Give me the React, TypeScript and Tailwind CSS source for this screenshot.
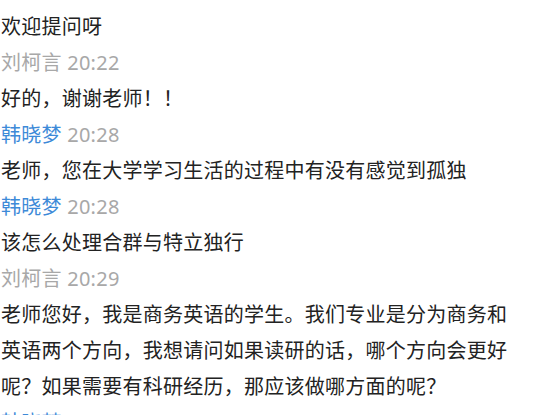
const messages = [
  { name: "刘柯言", time: "20:21", teacher: true, lines: [] as string[] },
  { name: "", time: "", teacher: false, lines: ["欢迎提问呀"] },
  { name: "刘柯言", time: "20:22", teacher: true, lines: ["好的，谢谢老师！！"] },
  {
    name: "韩晓梦",
    time: "20:28",
    teacher: false,
    lines: ["老师，您在大学学习生活的过程中有没有感觉到孤独"],
  },
  {
    name: "韩晓梦",
    time: "20:28",
    teacher: false,
    lines: ["该怎么处理合群与特立独行"],
  },
  {
    name: "刘柯言",
    time: "20:29",
    teacher: true,
    lines: [
      "老师您好，我是商务英语的学生。我们专业是分为商务和",
      "英语两个方向，我想请问如果读研的话，哪个方向会更好",
      "呢？如果需要有科研经历，那应该做哪方面的呢？",
    ],
  },
  { name: "韩晓梦", time: "20:31", teacher: false, lines: [] as string[] },
];

const App = () => {
  return (
    <div className="w-[544px] h-[415px] overflow-hidden bg-white">
      <div
        className="-mt-[27px] pl-[1px] text-[20px] leading-[36px] tracking-[0.25px] text-[#222222]"
        style={{ fontFamily: '"Noto Sans", "Noto Sans CJK SC", sans-serif' }}
      >
        {messages.map((msg, i) => (
          <div key={i}>
            {msg.name && (
              <div
                className={
                  msg.teacher ? "text-[#a8a8a8]" : "text-[#3d8ad8]"
                }
              >
                {msg.name} <span className="text-[#a8a8a8]">{msg.time}</span>
              </div>
            )}
            {msg.lines.map((line, j) => (
              <div key={j} className="whitespace-nowrap">
                {line}
              </div>
            ))}
          </div>
        ))}
      </div>
    </div>
  );
};

export default App;
